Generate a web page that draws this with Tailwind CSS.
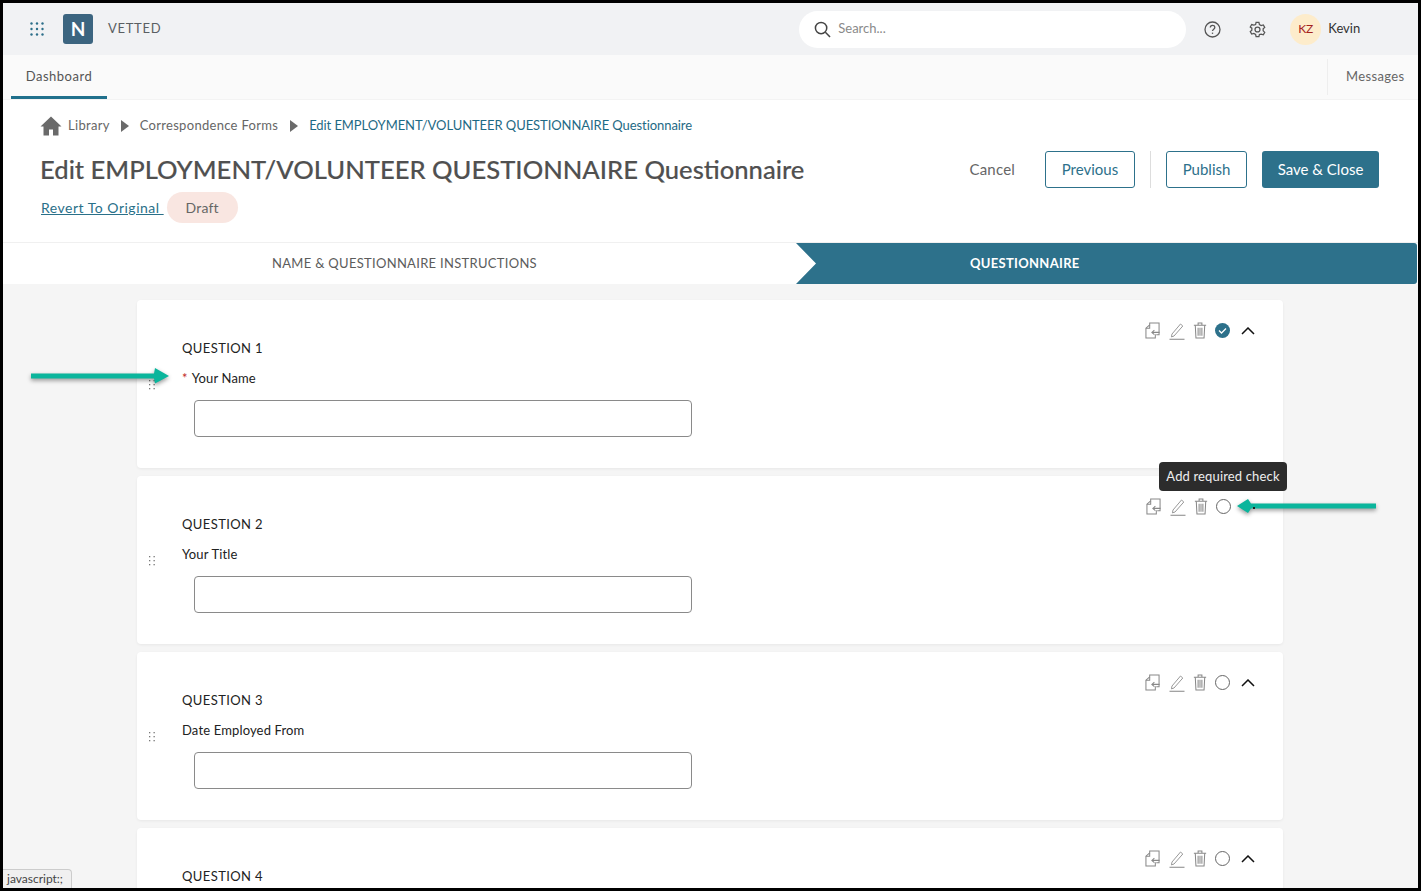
<!DOCTYPE html>
<html lang="en">

<head>
    <meta charset="UTF-8">
    <title>Edit Questionnaire</title>
    <script src="https://cdn.jsdelivr.net/npm/@tailwindcss/browser@4"></script>
</head>

<body class="w-[1421px] h-[891px] overflow-hidden bg-black font-['Lato','Liberation_Sans',sans-serif]">
    <!-- shared icons -->
    <svg class="hidden">
        <symbol id="i-move" viewBox="0 0 16 18" fill="none" stroke="#888" stroke-width="1.1">
            <path d="M5 3.500V1h10v12.500h-3" />
            <path d="M5 3 1 6.500V17h10v-4" />
            <path d="M1 6.500h4V3" />
            <path d="M15.500 11H7.500M10 8.500 7.300 11 10 13.500" />
        </symbol>
        <symbol id="i-pencil" viewBox="0 0 16 18" fill="none" stroke="#999" stroke-width="1">
            <path d="M3 12 11.500 2l2.300 2L5 14l-2.600.9z" />
            <path d="M.5 17.300h15" stroke-width="1.200" />
        </symbol>
        <symbol id="i-trash" viewBox="0 0 14 18" fill="none" stroke="#888" stroke-width="1.100">
            <path d="M.5 3.500h13M5 3.500V1h4v2.500" />
            <path d="M2 3.500l.7 13.500h8.600L12 3.500" />
            <path d="M5 6v8.500M7 6v8.500M9 6v8.500" />
        </symbol>
        <symbol id="i-chevron" viewBox="0 0 14 8" fill="none" stroke="#111" stroke-width="1.500">
            <path d="M1 7l6-6 6 6" />
        </symbol>
        <symbol id="i-grip" viewBox="0 0 7 10" fill="#777">
            <rect x="0" y="0" width="1.300" height="1.300" /><rect x="4.500" y="0" width="1.300" height="1.300" />
            <rect x="0" y="4" width="1.300" height="1.300" /><rect x="4.500" y="4" width="1.300" height="1.300" />
            <rect x="0" y="8" width="1.300" height="1.300" /><rect x="4.500" y="8" width="1.300" height="1.300" />
        </symbol>
    </svg>

    <div class="relative mx-[3px] mt-[3px] h-[885px] overflow-hidden bg-[#f5f5f5]">
        <!-- Top bar -->
        <header class="h-[52px] bg-[#f1f2f4] flex items-center pl-[27px]">
            <svg class="w-[14px] h-[14px]" viewBox="0 0 14 14" fill="#2d6f8a">
                <circle cx="1.500" cy="1.500" r="1.200" /><circle cx="7" cy="1.500" r="1.200" /><circle cx="12.500" cy="1.500" r="1.200" />
                <circle cx="1.500" cy="7" r="1.200" /><circle cx="7" cy="7" r="1.200" /><circle cx="12.500" cy="7" r="1.200" />
                <circle cx="1.500" cy="12.500" r="1.200" /><circle cx="7" cy="12.500" r="1.200" /><circle cx="12.500" cy="12.500" r="1.200" />
            </svg>
            <div class="ml-[19px] w-[30px] h-[30px] rounded-[3px] bg-[#3c6580] text-white font-bold text-[19px] flex items-center justify-center">N</div>
            <span class="ml-[15px] text-[13px] tracking-[0.7px] text-[#5a5f63]">VETTED</span>

            <div class="ml-[638px] w-[387px] h-[37px] rounded-full bg-white flex items-center pl-[15px]">
                <svg class="w-[17px] h-[17px]" viewBox="0 0 18 18" fill="none" stroke="#444" stroke-width="1.600">
                    <circle cx="7.500" cy="7.500" r="6" /><path d="M12 12l5 5" />
                </svg>
                <span class="ml-[7px] text-[13px] text-[#8a8a8a]">Search...</span>
            </div>
            <svg class="ml-[18px] w-[17px] h-[17px]" viewBox="0 0 17 17" fill="none" stroke="#555" stroke-width="1.300">
                <circle cx="8.500" cy="8.500" r="7.500" />
                <path d="M6.300 6.600c0-3 4.500-3 4.500-.2 0 1.800-2.300 1.700-2.300 3.600" />
                <path d="M8.500 11.600v1.300" />
            </svg>
            <svg class="ml-[28px] w-[17px] h-[17px]" viewBox="0 0 24 24" fill="none" stroke="#555" stroke-width="1.800">
                <circle cx="12" cy="12" r="3.500" />
                <path d="M10 2h4l.7 3 2.500 1.400 3-.9 2 3.500-2.200 2.100v2.800l2.200 2.100-2 3.500-3-.9L14.700 19l-.7 3h-4l-.7-3-2.500-1.400-3 .9-2-3.500 2.200-2.100v-2.800L1.800 8.500l2-3.500 3 .9L9.300 5z" />
            </svg>
            <div class="ml-[24px] w-[31px] h-[31px] rounded-full bg-[#fdeccb] text-[#a5211c] text-[12px] flex items-center justify-center">KZ</div>
            <span class="ml-[7px] text-[13px] text-[#333]">Kevin</span>
        </header>

        <!-- Tab bar -->
        <nav class="h-[45px] bg-[#fafafa] flex justify-between border-b border-[#f3f3f3]">
            <a class="ml-[8px] w-[96px] h-[44px] pt-[3px] flex items-center justify-center border-b-[3px] border-[#20708c] text-[13px] tracking-[0.5px] text-[#555]">Dashboard</a>
            <div class="my-[4px] border-l border-[#eeeeee] w-[91px] pl-[18px] flex items-center text-[13px] tracking-[0.35px] text-[#666]">Messages</div>
        </nav>

        <!-- Page header -->
        <section class="h-[143px] bg-white px-[37px] pt-[18px] border-b border-[#f0f0f0]">
            <div class="flex items-center h-[16px] text-[13px] tracking-[0.3px] text-[#666]">
                <svg class="w-[22px] h-[20px]" viewBox="0 0 22 20" fill="#6a6a6a">
                    <path d="M11 .5 .5 10.500h3V19.500h5.500v-6h4v6h5.500V10.500h3z" />
                </svg>
                <span class="ml-[6px]">Library</span>
                <svg class="ml-[11px] w-[8px] h-[12px]" viewBox="0 0 8 12" fill="#6a6a6a"><path d="M0 0l8 6-8 6z" /></svg>
                <span class="ml-[11px]">Correspondence Forms</span>
                <svg class="ml-[12px] w-[8px] h-[12px]" viewBox="0 0 8 12" fill="#6a6a6a"><path d="M0 0l8 6-8 6z" /></svg>
                <span class="ml-[11px] tracking-[-0.07px] text-[#1e6a85]">Edit EMPLOYMENT/VOLUNTEER QUESTIONNAIRE Questionnaire</span>
            </div>
            <div class="flex justify-between items-start mt-[17px]">
                <div>
                    <h1 class="text-[25.6px] leading-[37px] font-medium [-webkit-text-stroke:0.15px_#505050] text-[#505050] whitespace-nowrap">Edit EMPLOYMENT/VOLUNTEER QUESTIONNAIRE Questionnaire</h1>
                    <div class="flex items-center mt-[4px]">
                        <a class="ml-[1px] text-[14px] tracking-[0.5px] text-[#2a7089] underline whitespace-pre">Revert To Original </a>
                        <span class="ml-[3px] w-[71px] h-[31px] rounded-full bg-[#f9e6e1] text-[14px] tracking-[0.2px] text-[#666] flex items-center justify-center">Draft</span>
                    </div>
                </div>
                <div class="flex items-center mr-[2px]">
                    <span class="text-[15px] tracking-[0.2px] text-[#666]">Cancel</span>
                    <button class="ml-[30px] w-[90px] h-[37px] rounded-[3px] border border-[#2d718b] text-[15px] text-[#2d718b]">Previous</button>
                    <div class="ml-[15px] h-[37px] border-l border-[#dddddd]"></div>
                    <button class="ml-[15px] w-[81px] h-[37px] rounded-[3px] border border-[#2d718b] text-[15px] text-[#2d718b]">Publish</button>
                    <button class="ml-[15px] w-[117px] h-[37px] rounded-[3px] bg-[#2d718b] text-[15px] text-white">Save &amp; Close</button>
                </div>
            </div>
        </section>

        <!-- Steps -->
        <div class="h-[41px] flex bg-white text-[13px] tracking-[0.3px]">
            <div class="w-[793px] pl-[269px] flex items-center text-[#5c5c5c]">NAME &amp; QUESTIONNAIRE INSTRUCTIONS</div>
            <div class="flex-1 mr-[1px] pl-[174px] bg-[#2d718b] rounded-r-[3px] [clip-path:polygon(0_0,100%_0,100%_100%,0_100%,20px_50%)] flex items-center font-bold text-white">QUESTIONNAIRE</div>
        </div>

        <!-- Questions -->
        <main class="pt-[16px] pl-[134px] w-[1280px] flex flex-col gap-[8px]">
            <div class="relative h-[168px] rounded-[4px] bg-white shadow-[0_1px_3px_rgba(0,0,0,0.06)]">
                <div class="flex items-center justify-end pt-[21px] pr-[28px] h-[40px]">
                    <svg class="w-[15px] h-[17px]"><use href="#i-move" /></svg>
                    <svg class="ml-[9px] w-[16px] h-[18px]"><use href="#i-pencil" /></svg>
                    <svg class="ml-[8px] w-[14px] h-[17px]"><use href="#i-trash" /></svg>
                    <svg class="ml-[8px] w-[15px] h-[15px]" viewBox="0 0 15 15">
                        <circle cx="7.500" cy="7.500" r="7.500" fill="#2d718b" />
                        <path d="M4 7.500l2.500 2.500 4.500-4.500" fill="none" stroke="#fff" stroke-width="1.300" />
                    </svg>
                    <svg class="ml-[11px] w-[14px] h-[8px]"><use href="#i-chevron" /></svg>
                </div>
                <div class="pl-[45px]">
                    <div class="text-[13px] leading-[16px] tracking-[0.4px] text-[#222]">QUESTION 1</div>
                    <div class="mt-[14px] text-[13px] leading-[16px] tracking-[0.15px] text-[#222]"><span class="text-[#c0291f] mr-[4px]">*</span>Your Name</div>
                    <div class="mt-[14px] ml-[12px] w-[498px] h-[37px] rounded-[4px] border border-[#8a8a8a]"></div>
                </div>
                <svg class="absolute left-[12px] top-[80px] w-[7px] h-[10px]"><use href="#i-grip" /></svg>
            </div>

            <div class="relative h-[168px] rounded-[4px] bg-white shadow-[0_1px_3px_rgba(0,0,0,0.06)]">
                <div class="flex items-center justify-end pt-[21px] pr-[52px] h-[40px]">
                    <svg class="w-[15px] h-[17px]"><use href="#i-move" /></svg>
                    <svg class="ml-[9px] w-[16px] h-[18px]"><use href="#i-pencil" /></svg>
                    <svg class="ml-[8px] w-[14px] h-[17px]"><use href="#i-trash" /></svg>
                    <div class="ml-[8px] w-[15px] h-[15px] rounded-full border border-[#666]"></div>
                </div>
                <div class="pl-[45px]">
                    <div class="text-[13px] leading-[16px] tracking-[0.4px] text-[#222]">QUESTION 2</div>
                    <div class="mt-[14px] text-[13px] leading-[16px] tracking-[0.15px] text-[#222]">Your Title</div>
                    <div class="mt-[14px] ml-[12px] w-[498px] h-[37px] rounded-[4px] border border-[#8a8a8a]"></div>
                </div>
                <svg class="absolute left-[12px] top-[80px] w-[7px] h-[10px]"><use href="#i-grip" /></svg>
            </div>

            <div class="relative h-[168px] rounded-[4px] bg-white shadow-[0_1px_3px_rgba(0,0,0,0.06)]">
                <div class="flex items-center justify-end pt-[21px] pr-[28px] h-[40px]">
                    <svg class="w-[15px] h-[17px]"><use href="#i-move" /></svg>
                    <svg class="ml-[9px] w-[16px] h-[18px]"><use href="#i-pencil" /></svg>
                    <svg class="ml-[8px] w-[14px] h-[17px]"><use href="#i-trash" /></svg>
                    <div class="ml-[8px] w-[15px] h-[15px] rounded-full border border-[#666]"></div>
                    <svg class="ml-[11px] w-[14px] h-[8px]"><use href="#i-chevron" /></svg>
                </div>
                <div class="pl-[45px]">
                    <div class="text-[13px] leading-[16px] tracking-[0.4px] text-[#222]">QUESTION 3</div>
                    <div class="mt-[14px] text-[13px] leading-[16px] tracking-[0.15px] text-[#222]">Date Employed From</div>
                    <div class="mt-[14px] ml-[12px] w-[498px] h-[37px] rounded-[4px] border border-[#8a8a8a]"></div>
                </div>
                <svg class="absolute left-[12px] top-[80px] w-[7px] h-[10px]"><use href="#i-grip" /></svg>
            </div>

            <div class="relative h-[168px] rounded-[4px] bg-white shadow-[0_1px_3px_rgba(0,0,0,0.06)]">
                <div class="flex items-center justify-end pt-[21px] pr-[28px] h-[40px]">
                    <svg class="w-[15px] h-[17px]"><use href="#i-move" /></svg>
                    <svg class="ml-[9px] w-[16px] h-[18px]"><use href="#i-pencil" /></svg>
                    <svg class="ml-[8px] w-[14px] h-[17px]"><use href="#i-trash" /></svg>
                    <div class="ml-[8px] w-[15px] h-[15px] rounded-full border border-[#666]"></div>
                    <svg class="ml-[11px] w-[14px] h-[8px]"><use href="#i-chevron" /></svg>
                </div>
                <div class="pl-[45px]">
                    <div class="text-[13px] leading-[16px] tracking-[0.4px] text-[#222]">QUESTION 4</div>
                </div>
            </div>
        </main>

        <!-- Tooltip -->
        <div class="absolute left-[1156px] top-[459px] w-[128px] h-[29px] rounded-[4px] bg-[#2c2c2c] text-[13px] tracking-[0.15px] text-[#eeeeee] flex items-center justify-center whitespace-nowrap">Add required check</div>

        <!-- Callout arrows -->
        <svg class="absolute left-[25px] top-[360px] w-[145px] h-[26px] overflow-visible drop-shadow-[0_2px_2px_rgba(0,0,0,0.4)]" viewBox="0 0 145 26">
            <path d="M3 10.500h123l1-5.500 14 8-14 7.500-1-5H3z" fill="#0ab59c" />
        </svg>
        <svg class="absolute left-[1232px] top-[494px] w-[145px] h-[26px] overflow-visible drop-shadow-[0_2px_2px_rgba(0,0,0,0.4)]" viewBox="0 0 145 26">
            <path d="M141 6.500H16L13 2 2 9l11 7 3-4.500h125z" fill="#0ab59c" />
        </svg>
        <div class="absolute left-[1250px] top-[504px] w-[2px] h-[2px] bg-[#222]"></div>

        <!-- Status link -->
        <div class="absolute left-0 bottom-0 w-[69px] h-[19px] rounded-tr-[4px] bg-[#f0f0f0] border-t border-r border-[#cccccc] text-[12px] text-[#444] flex items-center pl-[4px]">javascript:;</div>
    </div>
</body>

</html>
